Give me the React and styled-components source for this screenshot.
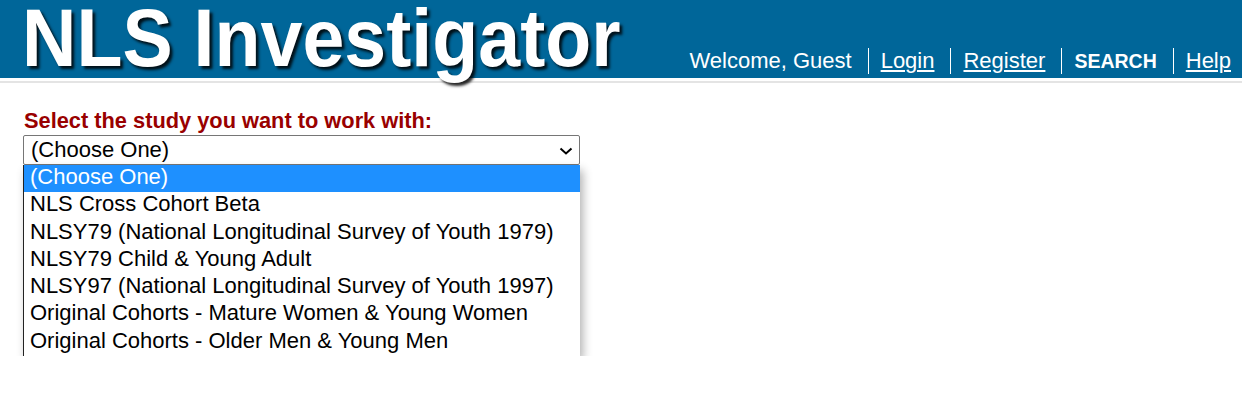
import React from 'react';
import styled, {createGlobalStyle} from 'styled-components';

const GlobalStyle = createGlobalStyle`
	body {
		margin: 0;
		background: #fff;
		font-family: "Liberation Sans", Arial, sans-serif;
	}
`;

const Header = styled.header`
	height: 78px;
	background: #006699;
	display: flex;
	justify-content: space-between;
	align-items: flex-start;
	position: relative;
	z-index: 1;
`;

const Title = styled.h1`
	margin: 0 0 0 22px;
	font-size: 81px;
	line-height: 77px;
	font-weight: 700;
	color: #fff;
	white-space: nowrap;
	transform: scaleX(0.93);
	transform-origin: left top;
	text-shadow: 3px 3px 3px rgba(0, 0, 0, 0.85);
`;

const Nav = styled.ul`
	list-style: none;
	margin: 0 0 4px;
	padding: 0 11px 0 0;
	display: flex;
	align-self: flex-end;
	gap: 16px;
`;

const NavItem = styled.li`
	font-size: ${p => (p.bold ? '19.5px' : '22px')};
	line-height: 26px;
	color: #fff;
	white-space: nowrap;
	padding-left: ${p => (p.first ? '0' : '12px')};
	border-left: ${p => (p.first ? 'none' : '1px solid #fff')};
	font-weight: ${p => (p.bold ? 700 : 400)};

	a {
		color: #fff;
		text-decoration: underline;
		text-underline-offset: 2px;
	}
`;

const Rule = styled.div`
	height: 2px;
	margin-top: 3px;
	background: #e4e4e4;
`;

const Main = styled.main`
	padding: 27px 0 0 23px;
`;

const Label = styled.div`
	font-size: 21.8px;
	line-height: 22px;
	font-weight: 700;
	color: #990000;
	margin-left: 1px;
`;

const SelectWrap = styled.div`
	width: 557px;
	margin-top: 3px;
`;

const SelectBox = styled.div`
	box-sizing: border-box;
	height: 30px;
	border: 1px solid #767676;
	border-radius: 2px;
	display: flex;
	align-items: center;
	justify-content: space-between;
	padding: 0 6px 0 7px;
	font-size: 22px;
	color: #000;
`;

const Chevron = styled.svg`
	width: 14px;
	height: 8px;
	margin-top: 1px;
`;

const OptionList = styled.ul`
	list-style: none;
	margin: 0;
	padding: 0;
	border-left: 1px solid #222;
	background: #fff;
	box-shadow: 3px 5px 9px rgba(0, 0, 0, 0.3);
`;

const Option = styled.li`
	box-sizing: border-box;
	height: 27.3px;
	line-height: 24px;
	padding: 0 0 0 6px;
	font-size: 22px;
	white-space: nowrap;
	color: ${p => (p.active ? '#fff' : '#000')};
	background: ${p => (p.active ? '#1e90ff' : 'transparent')};
`;

const studies = [
	'(Choose One)',
	'NLS Cross Cohort Beta',
	'NLSY79 (National Longitudinal Survey of Youth 1979)',
	'NLSY79 Child & Young Adult',
	'NLSY97 (National Longitudinal Survey of Youth 1997)',
	'Original Cohorts - Mature Women & Young Women',
	'Original Cohorts - Older Men & Young Men'
];

export default function App() {
	return (
		<>
			<GlobalStyle/>
			<Header>
				<Title>NLS Investigator</Title>
				<Nav>
					<NavItem first>Welcome, Guest</NavItem>
					<NavItem><a href="#login">Login</a></NavItem>
					<NavItem><a href="#register">Register</a></NavItem>
					<NavItem bold>SEARCH</NavItem>
					<NavItem><a href="#help">Help</a></NavItem>
				</Nav>
			</Header>
			<Rule/>
			<Main>
				<Label>Select the study you want to work with:</Label>
				<SelectWrap>
					<SelectBox>
						<span>(Choose One)</span>
						<Chevron viewBox="0 0 14 8">
							<path d="M1.5 1.5 L7 6.5 L12.5 1.5" fill="none" stroke="#000" strokeWidth="2"/>
						</Chevron>
					</SelectBox>
					<OptionList>
						{studies.map((s, i) => (
							<Option key={s} active={i === 0}>{s}</Option>
						))}
					</OptionList>
				</SelectWrap>
			</Main>
		</>
	);
}
